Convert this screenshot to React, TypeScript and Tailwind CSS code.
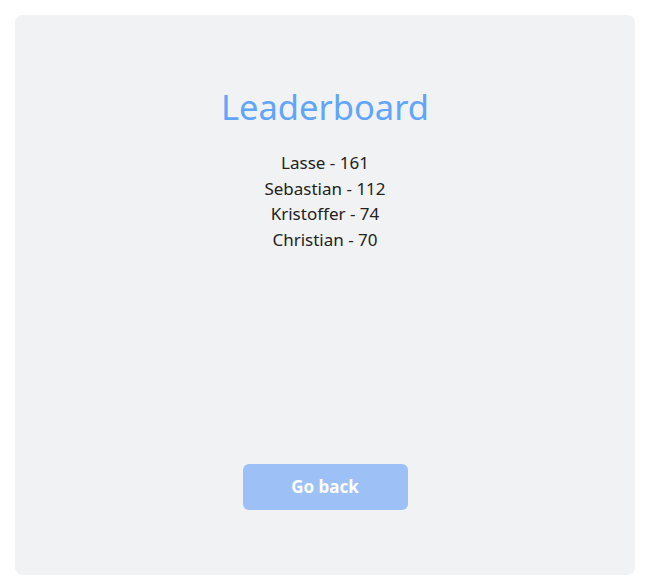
const players = [
  { name: 'Lasse', score: 161 },
  { name: 'Sebastian', score: 112 },
  { name: 'Kristoffer', score: 74 },
  { name: 'Christian', score: 70 },
]

export default function App() {
  return (
    <div className="min-h-screen bg-white pt-[15px] pl-[15px] font-['Noto_Sans',_'Open_Sans',_sans-serif]">
      <div className="flex h-[560px] w-[620px] flex-col items-center rounded-lg bg-[#f1f2f4] pt-[68px] pb-[65px]">
        <h1 className="text-[34.5px] leading-[48px] font-normal text-[#60a5fa]">Leaderboard</h1>
        {/* scores */}
        <ul className="mt-[19px] flex flex-col items-center text-[17px] leading-[25.5px] text-[#222]">
          {players.map((p) => (
            <li key={p.name}>
              {p.name} - {p.score}
            </li>
          ))}
        </ul>
        <button className="mt-auto h-[46px] w-[165px] rounded-md bg-[#9dc1f7] text-[17px] font-bold text-white">
          Go back
        </button>
      </div>
    </div>
  )
}
